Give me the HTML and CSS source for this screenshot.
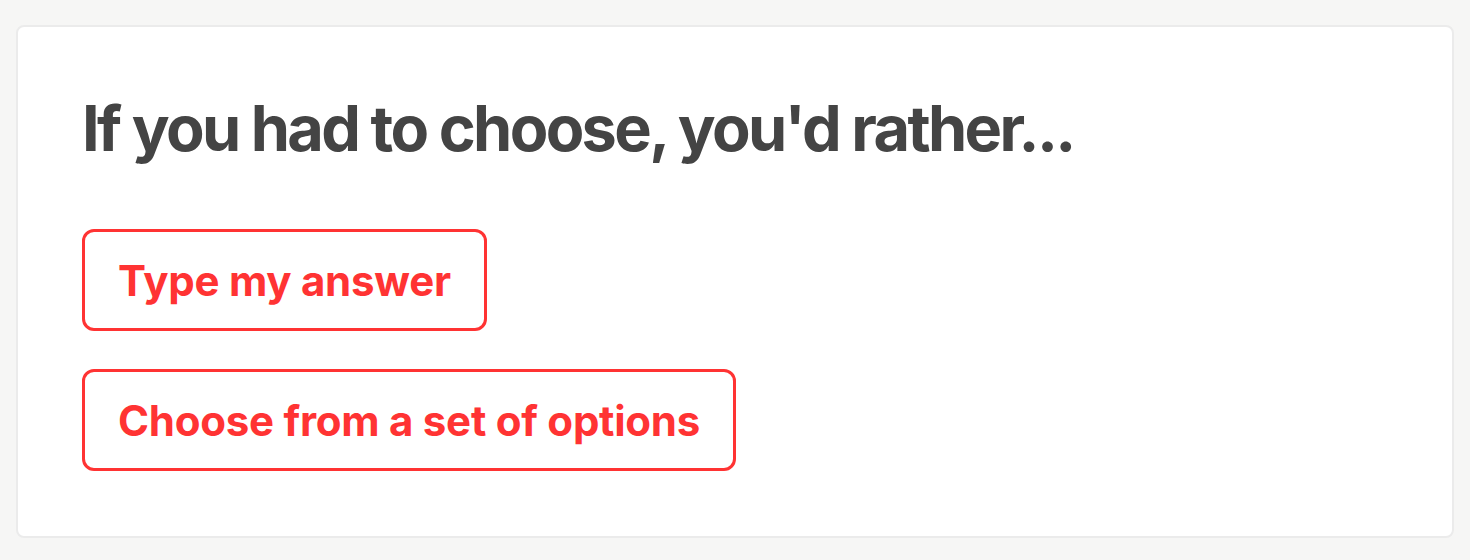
FILE: index.html
```html
<!DOCTYPE html>
<html>
<head>
<meta charset="utf-8">
<link rel="stylesheet" href="styles.css">
</head>
<body>
<div class="card">
  <h1 class="title">If you had to choose, you'd rather...</h1>
  <div class="options">
    <button class="option">Type my answer</button>
    <button class="option">Choose from a set of options</button>
  </div>
</div>
</body>
</html>
```
FILE: styles.css
```css
html, body {
  margin: 0;
  padding: 0;
  background: #f6f6f5;
  font-family: Inter, "Noto Sans", sans-serif;
}
body {
  padding: 25px 16px 0 16px;
}
.card {
  background: #ffffff;
  border: 2px solid #ebebeb;
  border-radius: 8px;
  height: 513px;
  box-sizing: border-box;
  padding: 63px 64px 0 64px;
}
.title {
  margin: 0;
  font-size: 63px;
  font-weight: 700;
  color: #444444;
  letter-spacing: -0.042em;
  line-height: 76px;
}
.options {
  display: flex;
  flex-direction: column;
  align-items: flex-start;
  gap: 38px;
  margin-top: 63px;
}
.option {
  font-family: inherit;
  background: #ffffff;
  border: 3px solid #ff3333;
  border-radius: 12px;
  color: #ff3333;
  font-size: 42px;
  font-weight: 700;
  padding: 0 33px;
  height: 102px;
  letter-spacing: -0.006em;
}
```
